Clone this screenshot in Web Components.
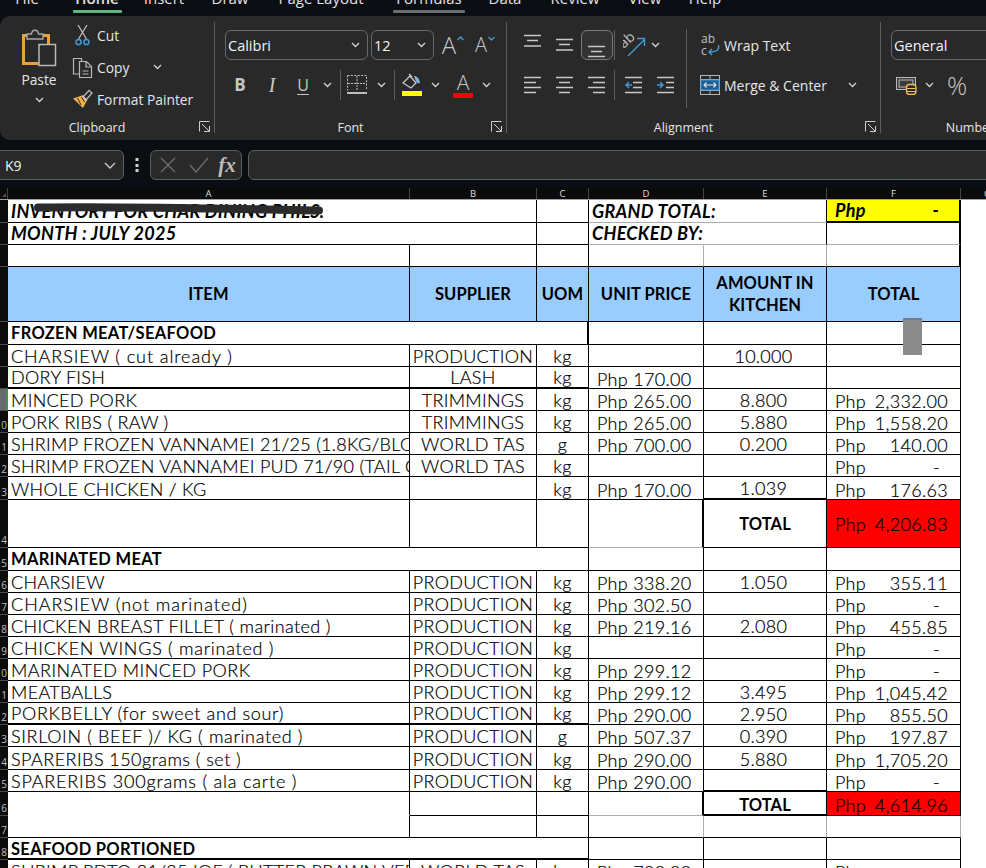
<!DOCTYPE html>
<html>
<head>
<meta charset="utf-8">
<title>Inventory</title>
<style>
  html, body { margin: 0; height: 868px; overflow: hidden; background: #0a0d12; }
</style>
</head>
<body>
<xl-tabs></xl-tabs>
<xl-ribbon></xl-ribbon>
<formula-bar></formula-bar>
<col-heads></col-heads>
<inv-sheet></inv-sheet>

<script>
const UI_FONT = "'Open Sans', 'Noto Sans', sans-serif";
const LINE = "#c8c8c8";
const BLUE = "#3f9ade";

const lines = (rows) => `<svg width="18" height="30" fill="none" stroke="${LINE}" stroke-width="1.4">` +
    rows.map(r => `<path d="M${r[0]} ${r[1]}H${r[2]}"/>`).join("") + `</svg>`;

const glyph = (ch, css) => `<span style="font:${css};color:#c6c6c6;line-height:30px">${ch}</span>`;

const ICONS = {
    chev: `<svg width="9" height="6" fill="none" stroke="#d4d4d4" stroke-width="1.3"><path d="M1 1l3.5 3.5L8 1"/></svg>`,
    paste: `<svg width="36" height="40" fill="none">
        <rect x="2.5" y="8.5" width="25" height="28" stroke="#e9a23b" stroke-width="3"/>
        <path d="M6 12V7h4.5c.5-5 6.5-5 7 0H22v5z" stroke="#a6a6a6" stroke-width="1.4" fill="#2a2a2a"/>
        <rect x="18" y="17.5" width="16.5" height="21" stroke="#b8b8b8" stroke-width="1.5" fill="#2a2a2a"/></svg>`,
    cut: `<svg width="15" height="21" fill="none">
        <path d="M3 0l8.5 14M12 0L3.5 14" stroke="#c4c4c4" stroke-width="1.2"/>
        <circle cx="3.6" cy="17" r="2.6" stroke="${BLUE}" stroke-width="1.5"/>
        <circle cx="11.4" cy="17" r="2.6" stroke="${BLUE}" stroke-width="1.5"/></svg>`,
    copy: `<svg width="21" height="21" fill="none" stroke="#b9b9b9" stroke-width="1.2">
        <path d="M7 17H1.5V1.5H9.5v3"/><path d="M7.5 4.5h7l5 5v11H7.5z"/><path d="M14 4.5V10h5.5"/>
        <path d="M10.5 14h6M10.5 17h6"/></svg>`,
    painter: `<svg width="21" height="20" fill="none">
        <path d="M11 8l6-6.5 3 2.5-6 7z" fill="#2a2a2a" stroke="#b5b5b5" stroke-width="1.3"/>
        <path d="M1 9.5L10 6.5l5 5L11 19z" fill="#efb04a"/>
        <path d="M5.5 9L9 16M9.5 8l3 5" stroke="#2a2a2a" stroke-width="1"/>
        <path d="M10 6.5l5 5" stroke="#c9c9c9" stroke-width="1.4"/></svg>`,
    launcher: `<svg width="11" height="11" fill="none" stroke="#cfcfcf" stroke-width="1">
        <path d="M.5 10.5V.5h10"/><path d="M3 3l7 7M10.5 5v5.5H5"/></svg>`,
    grow: `<span style="display:flex;align-items:flex-start">${glyph("A", `300 24px ${UI_FONT}`)}<svg width="7" height="30" fill="none" stroke="${BLUE}" stroke-width="1.4" style="margin-left:1px"><path d="M.5 10l3-3 3 3"/></svg></span>`,
    shrink: `<span style="display:flex;align-items:flex-start">${glyph("A", `300 20px ${UI_FONT}`)}<svg width="7" height="30" fill="none" stroke="${BLUE}" stroke-width="1.4" style="margin-left:1px"><path d="M.5 7l3 3 3-3"/></svg></span>`,
    bold: glyph("B", `700 17px ${UI_FONT}`),
    italic: glyph("I", `italic 400 20px 'Liberation Serif', serif`),
    under: `<span style="font:400 16px ${UI_FONT};color:#c6c6c6;text-decoration:underline;text-underline-offset:3px;line-height:30px">U</span>`,
    borders: `<svg width="20" height="20" fill="none" stroke="#bdbdbd" stroke-width="1">
        <path d="M.5 .5h19v15M.5 .5v15" stroke-dasharray="2 1.4"/><path d="M10 1v15M1 8.5h18" stroke-dasharray="2 1"/>
        <path d="M0 18h20" stroke-width="2"/></svg>`,
    fill: `<svg width="22" height="24" fill="none">
        <path d="M2 10l7-7 6 7-5 5z" stroke="#c8c8c8" stroke-width="1.3"/><path d="M8 1l3 3" stroke="#c8c8c8" stroke-width="1.3"/>
        <path d="M13 3c3 0 5 2 6 7-3 1-4-1-6-7z" fill="#7fb4dc"/>
        <rect x="1" y="18" width="20" height="5" fill="#ffff00"/></svg>`,
    color: `<span style="display:flex;flex-direction:column;align-items:center">${`<span style="font:300 21px ${UI_FONT};color:#c6c6c6;line-height:20px">A</span>`}<span style="width:20px;height:5px;background:#ff0000;margin-top:1px"></span></span>`,
    sep: `<span style="display:block;width:1px;height:30px;background:#5e5e5e"></span>`,
    atop: lines([[0, 5.5, 17], [3, 10.5, 14], [0, 16, 17]]),
    amid: lines([[0, 9.5, 17], [3, 14.5, 14], [0, 20, 17]]),
    abot: lines([[0, 15.5, 17], [3, 20.5, 14], [0, 25.5, 17]]),
    aleft: lines([[0, 7.5, 17], [0, 12.5, 12], [0, 17.5, 17], [0, 22.5, 12]]),
    acenter: lines([[0, 7.5, 17], [3, 12.5, 14], [0, 17.5, 17], [3, 22.5, 14]]),
    aright: lines([[0, 7.5, 17], [5, 12.5, 17], [0, 17.5, 17], [5, 22.5, 17]]),
    outdent: `<svg width="19" height="30" fill="none" stroke="${LINE}" stroke-width="1.4"><path d="M1 7.5h17M9 12.5h9M9 17.5h9M1 22.5h17"/><path d="M8 15H2M5 12l-3 3 3 3" stroke="${BLUE}"/></svg>`,
    indent: `<svg width="19" height="30" fill="none" stroke="${LINE}" stroke-width="1.4"><path d="M1 7.5h17M10 12.5h8M10 17.5h8M1 22.5h17"/><path d="M1 15h6M4 12l3 3-3 3" stroke="${BLUE}"/></svg>`,
    orient: `<svg width="23" height="23" fill="none"><text x="0" y="13" transform="rotate(-42 3 13)" font-family="'Open Sans'" font-size="14" fill="#c4c4c4">ab</text>
        <path d="M5 22L21 6M14 4.5h7.5V12" stroke="${BLUE}" stroke-width="1.4"/></svg>`,
    wrap: `<svg width="20" height="22" fill="none"><text font-family="'Open Sans'" font-size="12" fill="#c0c0c0"><tspan x="1" y="9">ab</tspan><tspan x="1" y="21">c</tspan></text>
        <path d="M18.5 11c1 6-3 7-9 7M12 15l-3 3 3 3" stroke="${BLUE}" stroke-width="1.4"/></svg>`,
    merge: `<svg width="20" height="20" fill="none">
        <rect x=".5" y=".5" width="19" height="19" stroke="#b4b4b4"/><path d="M0 4.5h20M0 15.5h20M10 0v4M10 16v4" stroke="#b4b4b4"/>
        <rect x="1" y="5" width="18" height="10" fill="#1c5d92" stroke="${BLUE}"/>
        <path d="M4 10h12M6.5 7.5L4 10l2.5 2.5M13.5 7.5L16 10l-2.5 2.5" stroke="#e6e6e6" stroke-width="1.1"/></svg>`,
    money: `<svg width="21" height="20" fill="none">
        <rect x=".5" y="2.5" width="19" height="12" stroke="#b9b9b9" fill="#3c3c3c"/><rect x="3" y="5" width="14" height="7" stroke="#b9b9b9"/>
        <rect x="10.5" y="9.5" width="9.5" height="10" rx="3" fill="#2a2a2a" stroke="#eec063" stroke-width="1.3"/>
        <path d="M10.5 13.5h9.5M10.5 16.5h9.5" stroke="#eec063"/></svg>`,
    percent: `<span style="font:300 25px ${UI_FONT};color:#c6c6c6;line-height:30px">%</span>`,
    cross: `<svg width="16" height="16" fill="none" stroke="#6f6f6f" stroke-width="1.3"><path d="M1 1l14 14M15 1L1 15"/></svg>`,
    check: `<svg width="20" height="16" fill="none" stroke="#6f6f6f" stroke-width="1.3"><path d="M1 8l6 7L19 1"/></svg>`,
    fx: `<span style="font:italic 700 21px 'Liberation Serif',serif;color:#bcbcbc;line-height:30px">fx</span>`,
    dots: `<svg width="4" height="16" fill="#cfcfcf"><rect x=".5" y="1" width="3" height="3"/><rect x=".5" y="7" width="3" height="3"/><rect x=".5" y="12" width="3" height="3"/></svg>`
};

class XlIcon extends HTMLElement {
    connectedCallback() {
        const w = this.getAttribute("w");
        const root = this.attachShadow({ mode: "open" });
        root.innerHTML = `
            <style>
                :host { display: flex; flex: none; height: 30px; align-items: center; justify-content: center; width: ${w}px; overflow: visible; }
                svg { display: block; flex: none; }
            </style>
            ${ICONS[this.getAttribute("name")]}`;
    }
}
customElements.define("xl-icon", XlIcon);

class XlTabs extends HTMLElement {
    constructor() {
        super();
        const tabs = [["File", 54], ["Home", 86, "#5fb67f", 49], ["Insert", 48], ["Draw", 84], ["Page Layout", 98],
            ["Formulas", 118, "#6d6d6d", 72], ["Data", 34], ["Review", 106], ["View", 34], ["Help", 86]];
        this.attachShadow({ mode: "open" }).innerHTML = `
            <style>
                :host { display: flex; height: 16px; overflow: hidden; font: 400 15px ${UI_FONT}; color: #e4e4e4; }
                .tab { flex: none; display: flex; flex-direction: column; align-items: center; margin-top: -12px; }
                .tab span { display: block; height: 20px; line-height: 20px; white-space: nowrap; }
                .tab.on span { font-weight: 600; }
                .tab i { display: block; height: 3px; margin-top: 2px; border-radius: 1px; }
            </style>
            ${tabs.map(t => `<div class="tab${t[0] == "Home" ? " on" : ""}" style="width:${t[1]}px"><span>${t[0]}</span>${t[2] ? `<i style="background:${t[2]};width:${t[3]}px"></i>` : ""}</div>`).join("")}`;
    }
}
customElements.define("xl-tabs", XlTabs);

class RbGroup extends HTMLElement {
    constructor() {
        super();
        this.attachShadow({ mode: "open" }).innerHTML = `
            <style>
                :host { display: flex; flex: none; flex-direction: column; box-sizing: border-box; height: 111px; margin-top: 6px; border-right: 1px solid #5e5e5e; }
                .body { flex: 1; min-height: 0; }
                .foot { display: grid; grid-template-columns: 1fr 20px; align-items: center; height: 14px; font-size: 12.5px; color: #e6e6e6; text-align: center; }
            </style>
            <div class="body"><slot></slot></div>
            <div class="foot"><span class="label"></span><span class="launch"></span></div>`;
    }
    connectedCallback() {
        this.style.width = this.getAttribute("w") + "px";
        this.shadowRoot.querySelector(".label").textContent = this.getAttribute("label");
        if (this.getAttribute("launcher") !== "no") {
            this.shadowRoot.querySelector(".launch").innerHTML = ICONS.launcher;
        }
    }
}
customElements.define("rb-group", RbGroup);

class XlSelect extends HTMLElement {
    connectedCallback() {
        const w = this.getAttribute("w");
        const root = this.attachShadow({ mode: "open" });
        root.innerHTML = `
            <style>
                :host { display: flex; flex: none; box-sizing: border-box; width: ${w}px; height: 30px; align-items: center; justify-content: space-between;
                        padding: 0 7px 0 2px; border: 1px solid #686868; border-radius: 6px; font-size: 14.5px; color: #eef4fa; }
            </style>
            <span>${this.getAttribute("value")}</span>
            ${this.hasAttribute("open") ? ICONS.chev : ""}`;
    }
}
customElements.define("xl-select", XlSelect);

class XlRibbon extends HTMLElement {
    constructor() {
        super();
        const ic = (name, w, extra) => `<xl-icon name="${name}" w="${w}" ${extra ? `style="${extra}"` : ""}></xl-icon>`;
        this.attachShadow({ mode: "open" }).innerHTML = `
            <style>
                :host { display: flex; height: 124px; overflow: hidden; background: #292929; border-radius: 10px 0 0 10px; font: 400 13.8px ${UI_FONT}; color: #e6e6e6; }
                .clip { display: grid; grid-template-columns: 62px 1fr; margin: -3px 0 0 8px; height: 96px; }
                .paste { display: flex; flex-direction: column; align-items: center; padding-top: 3px; }
                .paste span { margin-top: 3px; line-height: 20px; }
                .paste xl-icon { height: 10px; margin-top: 5px; }
                .stack { display: grid; grid-template-rows: repeat(3, 32px); }
                .line { display: flex; align-items: center; }
                .line xl-icon { margin-right: 4px; }
                .rows { display: flex; flex-direction: column; gap: 10px; padding-top: 8px; }
                .row { display: flex; align-items: center; height: 30px; }
                .sel { box-sizing: border-box; width: 32px; height: 30px; display: flex; justify-content: center; border: 1px solid #7a7a7a; border-radius: 6px; background: #333; }
                .align { display: flex; }
                .align .left { box-sizing: border-box; width: 180px; height: 79px; margin-top: 7px; padding-left: 10px; border-right: 1px solid #5e5e5e; display: flex; flex-direction: column; gap: 10px; padding-top: 1px; }
                .align .right { padding-left: 12px; }
            </style>
            <rb-group label="Clipboard" w="215">
                <div class="clip">
                    <div class="paste">${ic("paste", 36, "height:40px")}<span>Paste</span>${ic("chev", 10)}</div>
                    <div class="stack">
                        <div class="line" style="padding-left:5px">${ic("cut", 15)}<span style="margin-left:3px">Cut</span></div>
                        <div class="line" style="padding-left:2px">${ic("copy", 21)}<span>Copy</span>${ic("chev", 10, "margin-left:23px")}</div>
                        <div class="line" style="padding-left:2px">${ic("painter", 21)}<span>Format Painter</span></div>
                    </div>
                </div>
            </rb-group>
            <rb-group label="Font" w="292">
                <div class="rows" style="padding-left:10px">
                    <div class="row">
                        <xl-select w="143" value="Calibri" open></xl-select>
                        <xl-select w="63" value="12" open style="margin-left:3px"></xl-select>
                        ${ic("grow", 24, "margin-left:7px")}${ic("shrink", 22, "margin-left:9px")}
                    </div>
                    <div class="row">
                        ${ic("bold", 30)}${ic("italic", 34)}${ic("under", 28)}${ic("chev", 20)}${ic("sep", 6)}
                        ${ic("borders", 28)}${ic("chev", 20)}${ic("sep", 6)}${ic("fill", 30)}${ic("chev", 16)}
                        ${ic("color", 32, "margin-left:4px")}${ic("chev", 14)}
                    </div>
                </div>
            </rb-group>
            <rb-group label="Alignment" w="374">
                <div class="align">
                    <div class="left">
                        <div class="row">
                            ${ic("atop", 32)}${ic("amid", 32)}<div class="sel">${ic("abot", 30)}</div>${ic("sep", 3)}
                            ${ic("orient", 32, "margin-left:2px")}${ic("chev", 10)}
                        </div>
                        <div class="row">
                            ${ic("aleft", 32)}${ic("acenter", 32)}${ic("aright", 32)}${ic("sep", 3)}${ic("outdent", 34)}${ic("indent", 30)}
                        </div>
                    </div>
                    <div class="right rows">
                        <div class="row">${ic("wrap", 21)}<span style="margin-left:4px;font-size:14px">Wrap Text</span></div>
                        <div class="row">${ic("merge", 21)}<span style="margin-left:4px;font-size:14px">Merge &amp; Center</span>${ic("chev", 10, "margin-left:21px")}</div>
                    </div>
                </div>
            </rb-group>
            <rb-group label="Number" w="198" launcher="no" style="border:0">
                <div class="rows" style="padding-left:10px">
                    <div class="row"><xl-select w="190" value="General"></xl-select></div>
                    <div class="row" style="padding-left:5px">${ic("money", 21)}${ic("chev", 24)}${ic("percent", 32, "margin-left:0")}</div>
                </div>
            </rb-group>`;
    }
}
customElements.define("xl-ribbon", XlRibbon);

class FormulaBar extends HTMLElement {
    constructor() {
        super();
        this.attachShadow({ mode: "open" }).innerHTML = `
            <style>
                :host { display: flex; height: 30px; margin-top: 10px; overflow: hidden; font: 400 14px ${UI_FONT}; color: #eef4fa; }
                .box { box-sizing: border-box; flex: none; display: flex; align-items: center; height: 30px; border: 1px solid #5f5f5f; border-radius: 6px; background: #292929; }
                .name { width: 130px; margin-left: -6px; padding-left: 10px; justify-content: space-between; padding-right: 7px; }
                .fns { width: 92px; }
                .input { flex: 1 0 760px; margin: 0 -20px 0 6px; }
            </style>
            <div class="box name"><span>K9</span><svg width="12" height="7" fill="none" stroke="#cfcfcf" stroke-width="1.3"><path d="M1 1l5 5 5-5"/></svg></div>
            <xl-icon name="dots" w="26"></xl-icon>
            <div class="box fns">
                <xl-icon name="cross" w="32" style="margin-left:1px"></xl-icon><xl-icon name="check" w="29"></xl-icon><xl-icon name="fx" w="28"></xl-icon>
            </div>
            <div class="box input"></div>`;
    }
}
customElements.define("formula-bar", FormulaBar);

const COLS = "8px 402px 127px 52px 115px 123px 134px 1fr";

class ColHeads extends HTMLElement {
    constructor() {
        super();
        this.attachShadow({ mode: "open" }).innerHTML = `
            <style>
                :host { display: grid; grid-template-columns: ${COLS}; height: 12px; margin-top: 8px; box-sizing: border-box; background: #0b0b0c; border-bottom: 1px solid #a2a2a2; font: 400 9.5px ${UI_FONT}; color: #dedede; }
                div { box-sizing: border-box; border-right: 1px solid #444; text-align: center; line-height: 11px; overflow: hidden; }
                div:last-child { border: 0; text-align: left; padding-left: 23px; }
                svg { display: block; margin: 5px 0 0 2px; }
            </style>
            <div><svg width="4" height="4" fill="#555"><path d="M4 0v4H0z"/></svg></div>
            <div>A</div><div>B</div><div>C</div><div>D</div><div>E</div><div>F</div><div>G</div>`;
    }
}
customElements.define("col-heads", ColHeads);

class SheetRow extends HTMLElement {
    constructor() {
        super();
        this.attachShadow({ mode: "open" }).innerHTML = `
            <style>
                :host { display: grid; grid-template-columns: ${COLS}; }
                .head { box-sizing: border-box; overflow: hidden; display: flex; justify-content: flex-end; align-items: flex-end; background: #0c0c0c; border-bottom: 1px solid #4a4a4a;
                        font: 400 10px ${UI_FONT}; color: #bdbdbd; line-height: 14px; padding-right: 1px; }
                :host([selected]) .head { background: #6a6a6a; border-right: 2px solid #3f8f5f; }
            </style>
            <div class="head"></div><slot></slot>`;
    }
    connectedCallback() {
        this.style.height = this.getAttribute("h") + "px";
        const n = this.getAttribute("n");
        // the narrow header only shows the units digit of the two digit rows
        if (n && n.length > 1) this.shadowRoot.querySelector(".head").textContent = n.slice(-1);
    }
}
customElements.define("sheet-row", SheetRow);

class SheetCell extends HTMLElement {
    constructor() {
        super();
        this.attachShadow({ mode: "open" }).innerHTML = `
            <style>
                :host { display: flex; box-sizing: border-box; min-width: 0; overflow: hidden; white-space: nowrap; align-items: flex-end;
                        border-right: var(--br, 1px solid #000); border-bottom: var(--bb, 1px solid #000); background: var(--bg, #fff);
                        font: 300 var(--fs) var(--ff); letter-spacing: var(--ls); line-height: 18px; color: #000; padding: 0 3px 1px 3px;
                        -webkit-text-stroke: .2px #000; }
                :host([kind="l"]) { padding-left: 3px; }
                :host([kind="c"]) { justify-content: center; padding-left: 0; padding-right: 0; }
                :host([kind="p"]) { padding-left: 8px; padding-bottom: 0; }
                :host([kind="q"]) { justify-content: center; padding-left: 0; padding-bottom: 1px; }
                :host([kind="a"]) { justify-content: space-between; padding: 0 12px 0 8px; }
                :host([head]) { align-items: center; justify-content: center; text-align: center; white-space: normal; font-weight: 700; font-size: 16.5px; line-height: 22px; padding: 0; letter-spacing: var(--lsb); -webkit-text-stroke: 0; }
                :host([strong]) { font-weight: 700; font-size: 16.5px; letter-spacing: var(--lsb); padding-bottom: 2px; -webkit-text-stroke: 0; }
                :host([ital]) { font-weight: 700; font-style: italic; letter-spacing: .3px; padding-bottom: 2px; -webkit-text-stroke: 0; }
                :host([mid]) { align-items: center; padding-bottom: 0; line-height: 20px; }
            </style><slot></slot>`;
    }
}
customElements.define("sheet-cell", SheetCell);

const GRAY = "1px solid #adadad";
const THICK = "2px solid #000";
const NONE = "1px solid transparent";

// one entry per row: plain rows use the item fields, the others give raw cells
const ROWS = [
    { n: 1, h: 23, cells: [
        { span: 2, t: "INVENTORY FOR CHAR DINING PHILS.", kind: "l", ital: 1 }, {},
        { span: 2, t: "GRAND TOTAL:", kind: "l", ital: 1, bb: GRAY },
        { acct: ["Php", "-", 1], kind: "a", ital: 1, bg: "#ffff00", bb: THICK, br: THICK, bl: THICK }] },
    { n: 2, h: 22, cells: [
        { span: 2, t: "MONTH : JULY 2025", kind: "l", ital: 1 }, {},
        { span: 2, t: "CHECKED BY:", kind: "l", ital: 1, bb: GRAY }, { bb: GRAY, br: THICK }] },
    { n: 3, h: 22, cells: [{}, {}, {}, { br: GRAY, bb: "1px solid #000" }, { br: GRAY }, { br: THICK }] },
    { n: 4, h: 55, cells: ["ITEM", "SUPPLIER", "UOM", "UNIT PRICE", "AMOUNT IN KITCHEN", "TOTAL"].map(t => ({ t, head: 1, bg: "#99ccff" })) },
    { n: 6, h: 23, cells: [{ span: 3, t: "FROZEN MEAT/SEAFOOD", kind: "l", strong: 1, br: THICK, ls: ".3px" }, {}, {}, {}] },
    { n: 7, h: 22, item: "CHARSIEW ( cut already )", ls: ".92px", sup: "PRODUCTION", uom: "kg", qty: "10.000" },
    { n: 8, h: 22, item: "DORY FISH", sup: "LASH", uom: "kg", price: "170.00", thick: 1 },
    { n: 9, h: 22, sel: 1, item: "MINCED PORK", sup: "TRIMMINGS", uom: "kg", price: "265.00", qty: "8.800", total: "2,332.00" },
    { n: 10, h: 22, item: "PORK RIBS  ( RAW )", sup: "TRIMMINGS", uom: "kg", price: "265.00", qty: "5.880", total: "1,558.20" },
    { n: 11, h: 22, item: "SHRIMP FROZEN VANNAMEI 21/25 (1.8KG/BLC", sup: "WORLD TAS", uom: "g", price: "700.00", qty: "0.200", total: "140.00" },
    { n: 12, h: 22, item: "SHRIMP FROZEN VANNAMEI PUD 71/90 (TAIL C", sup: "WORLD TAS", uom: "kg", total: "-" },
    { n: 13, h: 23, item: "WHOLE CHICKEN / KG", uom: "kg", price: "170.00", qty: "1.039", total: "176.63", qtyBb: THICK },
    { n: 14, h: 48, cells: [{}, {}, {}, { bb: GRAY, br: THICK }, { t: "TOTAL", kind: "c", strong: 1, mid: 1, pt: 1 },
        { acct: ["Php", "4,206.83"], kind: "a", mid: 1, bg: "#ff0000" }] },
    { n: 15, h: 23, cells: [{ span: 3, t: "MARINATED MEAT", kind: "l", strong: 1, ls: ".3px" }, {}, {}, {}] },
    { n: 16, h: 22, item: "CHARSIEW", sup: "PRODUCTION", uom: "kg", price: "338.20", qty: "1.050", total: "355.11" },
    { n: 17, h: 22, item: "CHARSIEW (not marinated)", ls: ".97px", sup: "PRODUCTION", uom: "kg", price: "302.50", total: "-" },
    { n: 18, h: 22, item: "CHICKEN BREAST FILLET ( marinated )", ls: ".37px", sup: "PRODUCTION", uom: "kg", price: "219.16", qty: "2.080", total: "455.85" },
    { n: 19, h: 22, item: "CHICKEN WINGS ( marinated )", ls: ".73px", sup: "PRODUCTION", uom: "kg", total: "-" },
    { n: 20, h: 22, item: "MARINATED MINCED PORK", ls: ".45px", sup: "PRODUCTION", uom: "kg", price: "299.12", total: "-" },
    { n: 21, h: 22, item: "MEATBALLS", sup: "PRODUCTION", uom: "kg", price: "299.12", qty: "3.495", total: "1,045.42" },
    { n: 22, h: 22, item: "PORKBELLY (for sweet and sour)", ls: ".63px", sup: "PRODUCTION", uom: "kg", price: "290.00", qty: "2.950", total: "855.50", thick: 1 },
    { n: 23, h: 22, item: "SIRLOIN ( BEEF )/ KG ( marinated )", ls: ".65px", sup: "PRODUCTION", uom: "g", price: "507.37", qty: "0.390", total: "197.87" },
    { n: 24, h: 23, item: "SPARERIBS 150grams ( set )", ls: ".45px", sup: "PRODUCTION", uom: "kg", price: "290.00", qty: "5.880", total: "1,705.20" },
    { n: 25, h: 22, item: "SPARERIBS 300grams ( ala carte )", ls: ".8px", sup: "PRODUCTION", uom: "kg", price: "290.00", total: "-", qtyBb: THICK },
    { n: 26, h: 24, cells: [{ bb: NONE }, {}, {}, { bb: GRAY, br: THICK }, { t: "TOTAL", kind: "c", strong: 1, mid: 1, bb: THICK, pt: 3 },
        { acct: ["Php", "4,614.96"], kind: "a", mid: 1, bg: "#ff0000", pt: 2 }] },
    { n: 27, h: 22, cells: [{}, {}, {}, { br: GRAY }, { br: GRAY }, { br: GRAY }] },
    { n: 28, h: 22, cells: [{ span: 3, t: "SEAFOOD PORTIONED", kind: "l", strong: 1, bb: THICK, ls: ".3px", pb: 0 }, {}, {}, {}] },
    { n: 29, h: 22, item: "SHRIMP PDTO 21/25 IQF ( BUTTER PRAWN VER", sup: "WORLD TAS", uom: "kg", price: "780.00", total: "" }
];

class InvSheet extends HTMLElement {
    constructor() {
        super();
        this.attachShadow({ mode: "open" }).innerHTML = `
            <style>
                :host { display: block; position: relative; background: #fff; height: 668px; overflow: hidden;
                        --ff: Lato, 'Open Sans', sans-serif; --fs: 18px; --ls: .3px; --lsb: .1px; }
                .mark { position: absolute; left: 903px; top: 118px; width: 19px; height: 37px; background: #8b8b8b; border-top: 2px solid #6f7f8f; box-sizing: border-box; }
                svg { position: absolute; left: 0; top: 0; }
            </style>
            <div class="rows"></div>
            <svg width="340" height="20"><path d="M38 7.5C120 6 240 9 319 10.5" stroke="#2b2b2b" stroke-width="8" stroke-linecap="round" fill="none"/></svg>
            <div class="mark"></div>`;
        const box = this.shadowRoot.querySelector(".rows");
        for (const r of ROWS) box.append(this.makeRow(r));
    }
    makeCell(c) {
        const el = document.createElement("sheet-cell");
        if (c.span) el.style.gridColumn = "span " + c.span;
        if (c.kind) el.setAttribute("kind", c.kind);
        for (const flag of ["strong", "ital", "head", "mid"]) if (c[flag]) el.setAttribute(flag, "");
        if (c.bb) el.style.setProperty("--bb", c.bb);
        if (c.br) el.style.setProperty("--br", c.br);
        if (c.bg) el.style.setProperty("--bg", c.bg);
        if (c.ls) { el.style.setProperty("--ls", c.ls); el.style.setProperty("--lsb", c.ls); }
        if (c.pt) el.style.paddingTop = c.pt + "px";
        if (c.pb !== undefined) el.style.paddingBottom = c.pb + "px";
        if (c.acct) {
            const a = document.createElement("span");
            const b = document.createElement("span");
            a.textContent = c.acct[0];
            b.textContent = c.acct[1];
            if (c.acct[1] == "-") b.style.paddingRight = "8px";
            el.append(a, b);
        } else if (c.t) {
            el.textContent = c.t;
        }
        return el;
    }
    makeRow(r) {
        const row = document.createElement("sheet-row");
        row.setAttribute("h", r.h);
        row.setAttribute("n", r.n);
        if (r.sel) row.setAttribute("selected", "");
        let cells = r.cells;
        if (!cells) {
            const low = r.thick ? THICK : undefined;
            cells = [
                { t: r.item, kind: "l", bb: low, ls: r.ls },
                { t: r.sup, kind: "c", bb: low },
                { t: r.uom, kind: "c", bb: low },
                { t: r.price ? "Php " + r.price : "", kind: "p" },
                { t: r.qty, kind: "q", bb: r.qtyBb },
                r.total === undefined ? {} : { acct: ["Php", r.total], kind: "a" }
            ];
        }
        for (const c of cells) row.append(this.makeCell(c));
        return row;
    }
}
customElements.define("inv-sheet", InvSheet);
</script>
</body>
</html>
